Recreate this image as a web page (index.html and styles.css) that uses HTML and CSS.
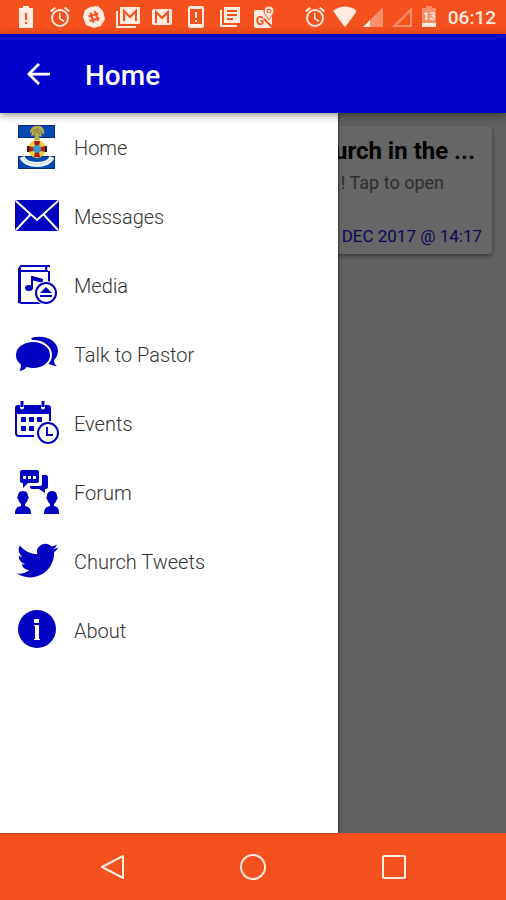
FILE: index.html
```html
<!DOCTYPE html>
<html lang="en">
<head>
    <meta charset="UTF-8">
    <meta name="viewport" content="width=device-width, initial-scale=1.0">
    <title>Home</title>
    <link rel="stylesheet" href="styles.css">
</head>
<body>
<div class="status-bar">
    <div class="status-notifications">
        <svg class="status-icon" viewBox="0 0 24 24"><path fill-rule="evenodd" d="M9 1h6v2h4v20H5V3h4zM11 8v7h2V8zM11 17v2h2v-2z"/></svg>
        <svg class="status-icon" viewBox="0 0 24 24"><path d="M22 5.700l-4.600-3.900-1.300 1.500 4.600 3.900zM7.900 3.400L6.600 1.900 2 5.700l1.300 1.500zM12.500 8H11v6l4.700 2.900.8-1.200-4-2.400zM12 4a9 9 0 1 0 0 18 9 9 0 0 0 0-18zm0 16a7 7 0 1 1 0-14 7 7 0 0 1 0 14z"/></svg>
        <svg class="status-icon" viewBox="0 0 24 24"><path d="M8 2l8-1 5 5 2 8-4 7-7 2-8-3-3-8 2-7z"/><path class="cut" d="M8.500 7.500l3 10M13 6l3 10M6.500 11.500l10-3M7.500 16l10-3"/></svg>
        <svg class="status-icon" viewBox="0 0 24 24"><path d="M0 6h2v15h18v2H0z"/><rect x="4" y="2" width="20" height="17" rx="1"/><path class="cut" d="M8 16V6l6 6 6-6v10"/></svg>
        <svg class="status-icon" viewBox="0 0 24 24"><rect x="2" y="4" width="20" height="16" rx="2"/><path class="cut" d="M6 18V7l6 6 6-6v11"/></svg>
        <svg class="status-icon" viewBox="0 0 24 24"><path fill-rule="evenodd" d="M6 1h12a2 2 0 0 1 2 2v18a2 2 0 0 1-2 2H6a2 2 0 0 1-2-2V3c0-1 1-2 2-2zM6 4v15h12V4zM11 7h2v6h-2zM11 15h2v2h-2z"/></svg>
        <svg class="status-icon" viewBox="0 0 24 24"><path d="M2 5h2v15h15v2H2z"/><path fill-rule="evenodd" d="M6 2h16v16H6zM9 5v2h10V5zM9 9v2h10V9zM9 13v2h6v-2z"/></svg>
        <svg class="status-icon" viewBox="0 0 24 24"><rect x="2" y="5" width="18" height="18" rx="2"/><path class="cut" d="M12 14l8 8"/><text class="map-letter" x="4" y="20">G</text><path class="pin" fill-rule="evenodd" d="M17 1a5 5 0 0 1 5 5c0 3-3 5-5 9-2-4-5-6-5-9a5 5 0 0 1 5-5zm0 3a2 2 0 1 0 0 4 2 2 0 0 0 0-4z"/></svg>
    </div>
    <div class="status-system">
        <svg class="status-icon" viewBox="0 0 24 24"><path d="M22 5.700l-4.600-3.900-1.300 1.500 4.600 3.900zM7.900 3.400L6.600 1.900 2 5.700l1.300 1.500zM12.500 8H11v6l4.700 2.900.8-1.200-4-2.400zM12 4a9 9 0 1 0 0 18 9 9 0 0 0 0-18zm0 16a7 7 0 1 1 0-14 7 7 0 0 1 0 14z"/></svg>
        <svg class="status-icon" viewBox="0 0 24 24"><path d="M1 6c7-6 17-6 24 0L14 21q-1 1-2 0z"/></svg>
        <svg class="status-icon" viewBox="0 0 24 24"><path opacity=".4" d="M22 2v20H2z"/><path d="M9 15v7H2z"/></svg>
        <svg class="status-icon faint" viewBox="0 0 24 24"><path fill-rule="evenodd" d="M22 2v20H2zM20 7L7 20h13z"/></svg>
        <svg class="status-icon" viewBox="0 0 24 24"><path opacity=".4" d="M7 1h6v2h4v19H3V3h4z"/><path d="M3 18h14v4H3z"/><text class="battery-level" x="4" y="15">13</text></svg>
        <span class="clock">06:12</span>
    </div>
</div>

<header class="app-bar">
    <button class="back-button" aria-label="Back">
        <svg viewBox="0 0 24 24"><path d="M24 12H2M12 1L1 12l11 11"/></svg>
    </button>
    <h1>Home</h1>
</header>

<div class="content">
    <main class="feed">
        <article class="card">
            <h2 class="card-title">Church in the ...</h2>
            <p class="card-text">! Tap to open</p>
            <p class="card-date">10 DEC 2017 @ 14:17</p>
        </article>
    </main>
    <div class="scrim"></div>
    <nav class="drawer">
        <a href="#home" class="drawer-item">
            <svg class="drawer-icon" viewBox="0 0 46 45">
                <path fill="#0648b4" d="M4 0h37v13H4zM4 31h37v13H4z"/>
                <path fill="none" stroke="#0a2a80" d="M4.500.5h36v12h-36zM4.500 31.500h36v12h-36z"/>
                <path fill="#b9a94e" d="M16 8c0-5 4-8 8-7 4-1 7 4 6 9l-3-3 1 5-3-1 1 4h-6l1-5-4 1 1-4z"/>
                <path fill="none" stroke="#6d7440" d="M19 6l4-2 5 3M20 9l3-3 3 4"/>
                <circle cx="23" cy="24" r="9" fill="#e8cf35"/>
                <path fill="#b01820" d="M20 16h6l-1 5v6l1 5h-6l1-5v-6zM14 21l5 1h8l5-1v6l-5-1h-8l-5 1z"/>
                <path fill="none" stroke="#301010" stroke-width="2" d="M14 21v6M32 21v6"/>
                <circle cx="23" cy="24" r="4" fill="#3c9bc5"/>
                <path fill="none" stroke="#eef5ff" stroke-width="5" d="M8 32c4 10 26 10 30 0"/>
                <path fill="none" stroke="#7d9bd0" stroke-dasharray="1 2" d="M10 34c4 7 22 7 26 0"/>
            </svg>
            <span>Home</span>
        </a>
        <a href="#messages" class="drawer-item">
            <svg class="drawer-icon" viewBox="0 0 46 45">
                <rect x="1" y="6" width="44" height="31" rx="2"/>
                <path class="line-white" d="M2 7l21 19L44 7M2 36l14-15M44 36L30 21"/>
            </svg>
            <span>Messages</span>
        </a>
        <a href="#media" class="drawer-item">
            <svg class="drawer-icon" viewBox="0 0 46 45">
                <path d="M4 5h3v35H4z"/>
                <path class="line" d="M36 3H7a3 3 0 0 0 0 5h26q-2-2 0-5M35 8v14M5 5v32q0 3 3 3h26"/>
                <path class="line" d="M18 25V14l10 3v6"/>
                <path d="M17 13l12 3v4l-12-3z"/>
                <ellipse cx="15" cy="25" rx="4" ry="3"/>
                <circle cx="32" cy="30" r="12" fill="#fff"/>
                <circle class="line" cx="32" cy="30" r="10"/>
                <path d="M32 24l6 6H26zM26 32h12v2H26z"/>
            </svg>
            <span>Media</span>
        </a>
        <a href="#talk" class="drawer-item">
            <svg class="drawer-icon" viewBox="0 0 46 45">
                <path d="M17 6c13-4 27 2 27 13 0 4-2 7-4 9 0 3 1 5 3 6-4 0-7-1-9-3z"/>
                <path class="bubble-edge" d="M19 9c10 0 18 6 18 14s-8 14-18 14c-2 0-4 0-6-1-2 3-6 4-10 4 2-2 3-4 3-7-3-2-5-6-5-10C1 15 9 9 19 9z"/>
            </svg>
            <span>Talk to Pastor</span>
        </a>
        <a href="#events" class="drawer-item">
            <svg class="drawer-icon" viewBox="0 0 46 45">
                <path d="M1 7q0-3 3-3h2v3q2 3 4 0V4h17v3q2 3 4 0V4h3q3 0 3 3v6H1z"/>
                <path class="line-thick" d="M8 0v6M29 0v6"/>
                <path class="line" d="M2 12v20q0 3 3 3h15M36 12v8"/>
                <path d="M7 16h5v5H7zM15 16h5v5h-5zM23 16h5v5h-5zM7 25h5v5H7zM15 25h5v5h-5z"/>
                <circle cx="34" cy="32" r="12" fill="#fff"/>
                <circle class="line" cx="34" cy="32" r="10"/>
                <path class="line" d="M33 26v8h6"/>
            </svg>
            <span>Events</span>
        </a>
        <a href="#forum" class="drawer-item">
            <svg class="drawer-icon" viewBox="0 0 46 45">
                <path d="M28 5h4q2 0 2 2v10q0 2-2 2h-1v4l-6-4h-7q-2 0-2-3h10q2 0 2-2z"/>
                <path d="M8 0h15q2 0 2 2v9q0 2-2 2h-9l-5 5v-5H8q-2 0-2-2V2q0-2 2-2z"/>
                <path fill="#fff" d="M9 6h3v3H9zM14 6h3v3h-3zM19 6h3v3h-3z"/>
                <path d="M9 21c4 0 5 3 5 5l1 2-1 1c-1 3-2 4-3 5v2c4 1 6 2 6 8H1c0-6 2-7 6-8v-2c-1-1-2-2-3-5l-1-1 1-2c0-2 1-5 5-5z"/>
                <path d="M38 21c4 0 5 3 5 5l1 2-1 1c-1 3-2 4-3 5v2c4 1 5 2 5 8H30c0-6 2-7 6-8v-2c-1-1-2-2-3-5l-1-1 1-2c0-2 1-5 5-5z"/>
            </svg>
            <span>Forum</span>
        </a>
        <a href="#tweets" class="drawer-item">
            <svg class="drawer-icon" viewBox="0 0 46 45">
                <path transform="translate(3 1) scale(1.720)" d="M23.953 4.570a10 10 0 0 1-2.825.775 4.958 4.958 0 0 0 2.163-2.723c-.951.555-2.005.959-3.127 1.184a4.920 4.920 0 0 0-8.384 4.482C7.690 8.095 4.067 6.130 1.640 3.162a4.822 4.822 0 0 0-.666 2.475c0 1.710.870 3.213 2.188 4.096a4.904 4.904 0 0 1-2.228-.616v.060a4.923 4.923 0 0 0 3.946 4.827 4.996 4.996 0 0 1-2.212.085 4.936 4.936 0 0 0 4.604 3.417 9.867 9.867 0 0 1-6.102 2.105c-.390 0-.779-.023-1.170-.067a13.995 13.995 0 0 0 7.557 2.209c9.053 0 13.998-7.496 13.998-13.985 0-.210 0-.420-.015-.630A9.935 9.935 0 0 0 24 4.590z"/>
            </svg>
            <span>Church Tweets</span>
        </a>
        <a href="#about" class="drawer-item">
            <svg class="drawer-icon" viewBox="0 0 46 45">
                <circle cx="23" cy="21" r="19"/>
                <path fill="#fff" d="M20 11h5v4h-5zM20 17h5v14h1v1h-6v-1h1V18h-1z"/>
            </svg>
            <span>About</span>
        </a>
    </nav>
</div>

<footer class="nav-bar">
    <button aria-label="Back"><svg viewBox="0 0 28 28"><path d="M25 3v22L4 14z"/></svg></button>
    <button aria-label="Home"><svg viewBox="0 0 28 28"><circle cx="14" cy="14" r="12"/></svg></button>
    <button aria-label="Recent apps"><svg viewBox="0 0 28 28"><rect x="3" y="3" width="22" height="22" rx="1"/></svg></button>
</footer>
</body>
</html>
```

FILE: styles.css
```css
* {
    box-sizing: border-box;
}

body {
    margin: 0;
    min-height: 100vh;
    display: flex;
    flex-direction: column;
    background-color: #ffffff;
    font-family: Roboto, "Liberation Sans", sans-serif;
}

h1, h2, p {
    margin: 0;
}

button {
    padding: 0;
    border: none;
    background: none;
    cursor: pointer;
}

svg {
    display: block;
}

/* status bar */
.status-bar {
    display: flex;
    justify-content: space-between;
    align-items: center;
    height: 34px;
    padding: 0 10px 0 14px;
    background-color: #f4511e;
    color: #ffebe0;
}

.status-notifications, .status-system {
    display: flex;
    align-items: center;
    gap: 10px;
}

.status-system {
    gap: 5px;
}

.status-icon {
    width: 24px;
    height: 24px;
    fill: #ffebe0;
}

.status-icon .cut {
    fill: none;
    stroke: #f4511e;
    stroke-width: 2;
}

.status-icon .pin {
    stroke: #f4511e;
    stroke-width: 1;
}

.faint {
    opacity: 0.4;
}

.map-letter {
    font-size: 12px;
    font-weight: bold;
    fill: #f4511e;
}

.battery-level {
    font-size: 11px;
    font-weight: bold;
}

.clock {
    font-size: 19px;
    font-weight: 500;
}

/* app bar */
.app-bar {
    position: relative;
    z-index: 2;
    display: flex;
    align-items: center;
    gap: 34px;
    height: 79px;
    padding: 0 27px;
    background-color: #0000cd;
    color: #ffffff;
    box-shadow: 0 2px 8px rgba(0, 0, 0, 0.45);
}

.back-button svg {
    width: 24px;
    height: 22px;
    fill: none;
    stroke: #ffffff;
    stroke-width: 3;
}

.app-bar h1 {
    padding-top: 3px;
    font-size: 28px;
    font-weight: 500;
}

/* feed behind the drawer */
.content {
    position: relative;
    flex: 1;
    display: flex;
    flex-direction: column;
}

.feed {
    flex: 1;
    padding: 13px 14px;
    background-color: #f0f0f0;
}

.card {
    padding: 10px 10px 6px;
    border-radius: 3px;
    background-color: #ffffff;
    box-shadow: 0 2px 4px rgba(0, 0, 0, 0.4);
    text-align: right;
}

.card-title {
    padding-right: 7px;
    font-size: 24px;
    font-weight: bold;
    line-height: 30px;
    color: #000000;
}

.card-text {
    padding-right: 38px;
    font-size: 18px;
    line-height: 34px;
    color: #757575;
}

.card-date {
    margin-top: 24px;
    font-size: 17px;
    line-height: 24px;
    color: #2211e0;
}

.scrim {
    position: absolute;
    inset: 0;
    background-color: rgba(0, 0, 0, 0.6);
}

/* drawer */
.drawer {
    position: absolute;
    top: 0;
    bottom: 0;
    left: 0;
    width: 66.8%;
    background-color: #ffffff;
    box-shadow: 1px 0 2px rgba(0, 0, 0, 0.5);
}

.drawer-item {
    display: flex;
    align-items: center;
    gap: 14px;
    height: 69px;
    padding: 0 14px;
    font-size: 20px;
    font-weight: 300;
    color: #333333;
    text-decoration: none;
}

.drawer-icon {
    width: 46px;
    height: 45px;
    fill: #0000c0;
}

.drawer-icon .line, .drawer-icon .line-thick, .drawer-icon .line-white {
    fill: none;
    stroke: #0000c0;
    stroke-width: 2;
}

.drawer-icon .line-thick {
    stroke-width: 3;
}

.drawer-icon .line-white {
    stroke: #ffffff;
}

.drawer-icon .bubble-edge {
    stroke: #ffffff;
    stroke-width: 2;
}

/* system navigation */
.nav-bar {
    display: grid;
    grid-template-columns: repeat(3, 1fr);
    align-items: center;
    height: 67px;
    padding: 0 42px;
    background-color: #f4511e;
}

.nav-bar button {
    display: flex;
    justify-content: center;
}

.nav-bar svg {
    width: 28px;
    height: 28px;
    fill: none;
    stroke: #ffebe0;
    stroke-width: 2;
    stroke-linejoin: round;
}
```
